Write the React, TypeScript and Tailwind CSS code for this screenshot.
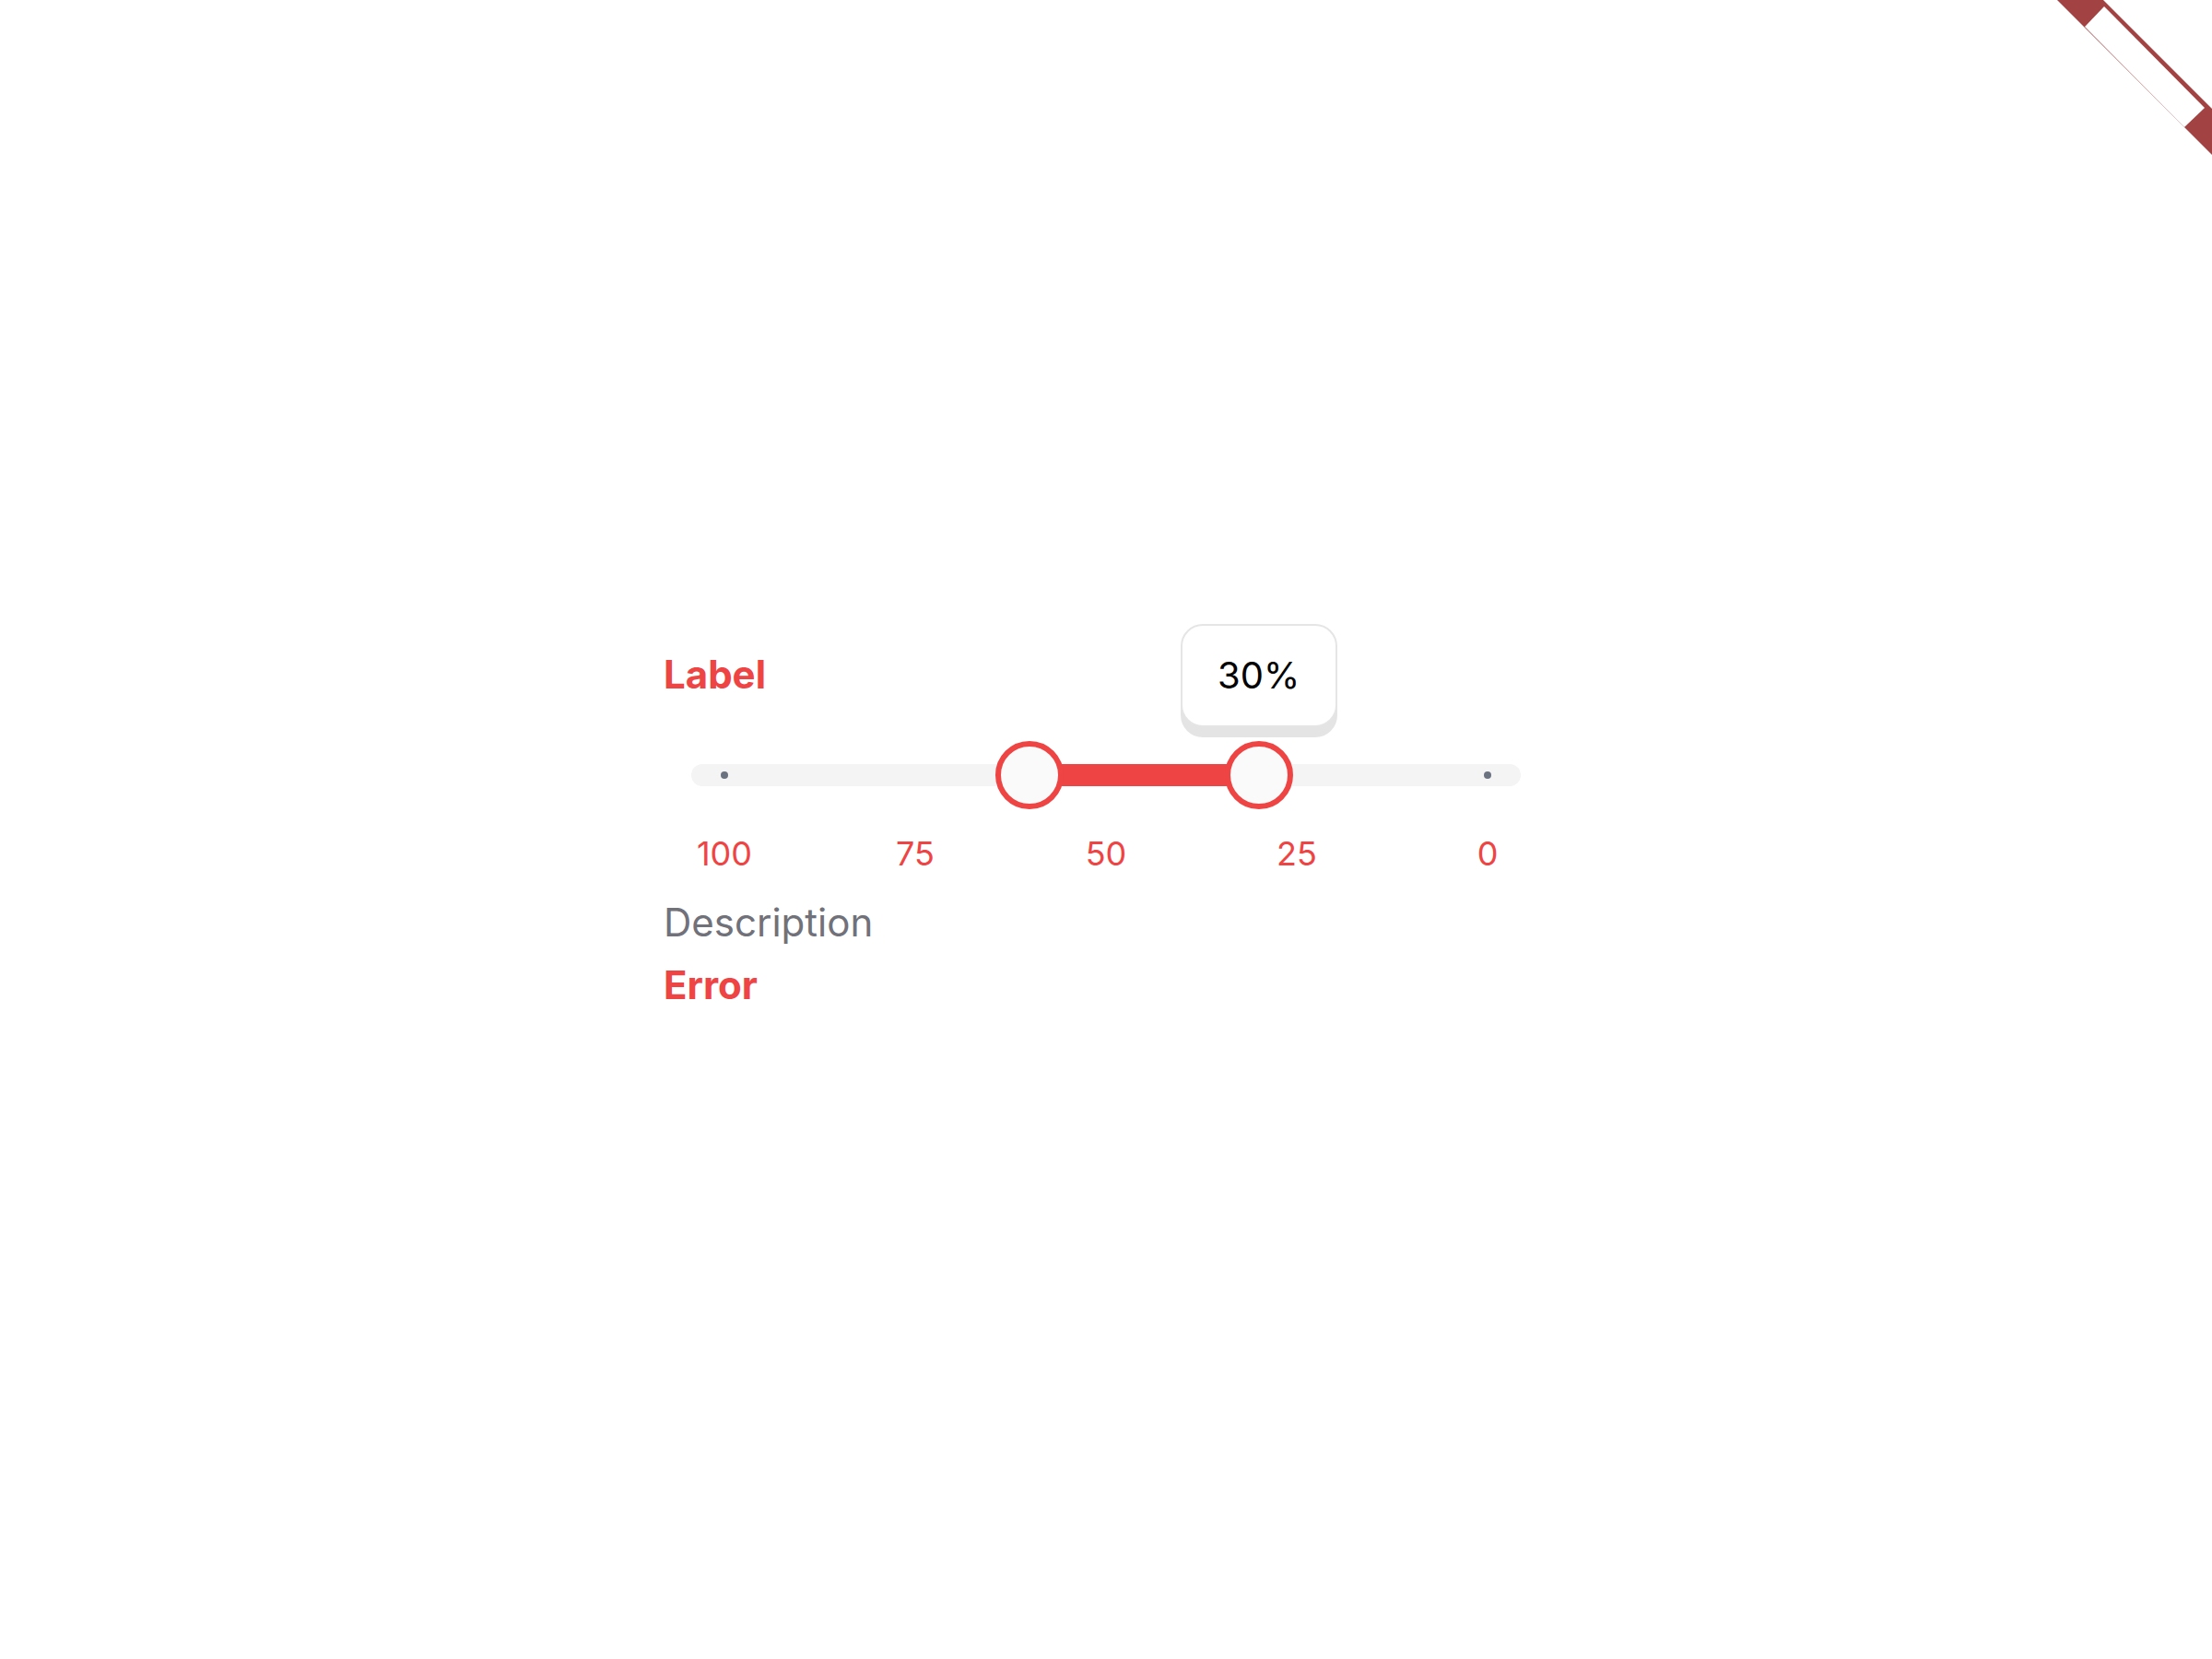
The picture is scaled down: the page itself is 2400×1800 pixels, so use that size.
const ticks = [100, 75, 50, 25, 0];

// value -> px offset inside the 900px track (100 on the left, 0 on the right)
const pos = (v: number) => 36 + ((100 - v) / 100) * 828;

const CornerRibbon = () => (
  <svg className="absolute right-0 top-0" width="180" height="180" viewBox="0 0 180 180">
    <polygon points="12,0 62,0 180,118 180,168" fill="#a24242" />
    <polygon points="42,29 63,7 172,117 150,138" fill="#ffffff" />
  </svg>
);

const RangeSlider = () => {
  const low = 60;
  const high = 30;
  const a = pos(low);
  const b = pos(high);

  return (
    <div className="flex w-[960px] flex-col font-['Inter',sans-serif]">
      <span className="text-[42px] font-bold leading-[42px] text-[#ef4444]">Label</span>

      <div className="relative mx-[30px] mt-[52px] flex h-[72px] items-center">
        <div className="flex h-6 w-full items-center justify-between rounded-full bg-[#f4f4f5] px-[32px]">
          <span className="h-2 w-2 rounded-full bg-[#6b7280]" />
          <span className="h-2 w-2 rounded-full bg-[#6b7280]" />
        </div>
        <div
          className="absolute top-1/2 h-6 -translate-y-1/2 bg-[#ef4444]"
          style={{ left: a, width: b - a }}
        />
        <div
          className="absolute top-1/2 h-[74px] w-[74px] -translate-x-1/2 -translate-y-1/2 rounded-full border-[6px] border-[#ef4444] bg-[#fafafa]"
          style={{ left: a }}
        />
        <div
          className="absolute top-1/2 h-[74px] w-[74px] -translate-x-1/2 -translate-y-1/2 rounded-full border-[6px] border-[#ef4444] bg-[#fafafa]"
          style={{ left: b }}
        />
        <div
          className="absolute bottom-[88px] flex h-[112px] w-[170px] -translate-x-1/2 items-center justify-center rounded-[24px] border-2 border-[#e5e5e5] bg-white text-[40px] leading-none text-black shadow-[0_11px_0_0_#e4e4e4]"
          style={{ left: b }}
        >
          30%
        </div>
      </div>

      <div className="mx-[66px] mt-[31px] flex justify-between text-[36px] leading-[36px] text-[#ef4444]">
        {ticks.map((t) => (
          <span key={t} className="flex w-0 justify-center">
            {t}
          </span>
        ))}
      </div>

      <span className="mt-[36px] text-[42px] leading-[42px] text-[#71717a]">Description</span>
      <span className="mt-[26px] text-[42px] font-bold leading-[42px] text-[#ef4444]">Error</span>
    </div>
  );
};

export default function App() {
  return (
    <div className="relative flex min-h-screen items-center justify-center overflow-hidden bg-white">
      <CornerRibbon />
      <RangeSlider />
    </div>
  );
}
